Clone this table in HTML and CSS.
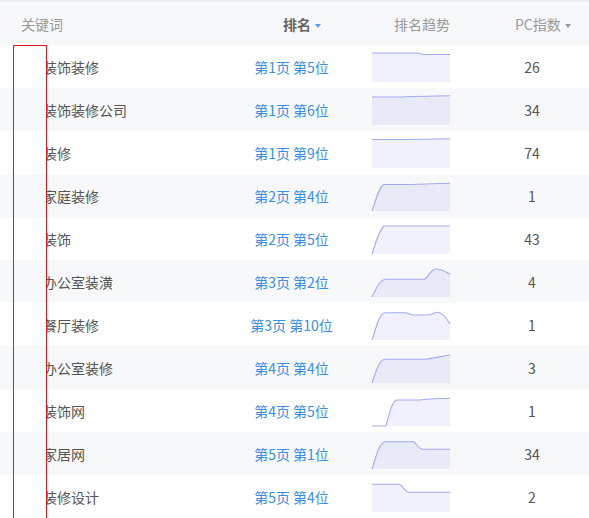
FILE: index.html
```html
<!DOCTYPE html>
<html lang="zh-CN">
<head>
<meta charset="utf-8">
<link rel="stylesheet" href="styles.css">
</head>
<body>
<div class="table">
  <div class="row head">
    <div class="c kw"><span class="h-kw">关键词</span></div>
    <div class="c rank"><span class="h-rank">排名<i class="arr blue"></i></span></div>
    <div class="c trend"><span class="h-trend">排名趋势</span></div>
    <div class="c pc"><span class="h-pc">PC指数<i class="arr gray"></i></span></div>
  </div>

  <div class="row">
    <div class="c kw"><span class="clip"><span class="t">装饰装修</span></span></div>
    <div class="c rank"><a class="lnk">第1页 第5位</a></div>
    <div class="c trend"><svg class="spark" viewBox="0 0 78 30"><path class="f" d="M0,1 L44,1 C48,1 49,2.5 53,2.5 L78,2.5 L78,30 L0,30 Z"/><path class="l" d="M0,1 L44,1 C48,1 49,2.5 53,2.5 L78,2.5"/></svg></div>
    <div class="c pc">26</div>
  </div>
  <div class="row alt">
    <div class="c kw"><span class="clip"><span class="t">装饰装修公司</span></span></div>
    <div class="c rank"><a class="lnk">第1页 第6位</a></div>
    <div class="c trend"><svg class="spark" viewBox="0 0 78 30"><path class="f" d="M0,2 L30,2 C40,1.5 50,1.2 78,0.8 L78,30 L0,30 Z"/><path class="l" d="M0,2 L30,2 C40,1.5 50,1.2 78,0.8"/></svg></div>
    <div class="c pc">34</div>
  </div>
  <div class="row">
    <div class="c kw"><span class="clip"><span class="t">装修</span></span></div>
    <div class="c rank"><a class="lnk">第1页 第9位</a></div>
    <div class="c trend"><svg class="spark" viewBox="0 0 78 30"><path class="f" d="M0,1.5 L40,1.5 C55,1.2 65,1 78,0.8 L78,30 L0,30 Z"/><path class="l" d="M0,1.5 L40,1.5 C55,1.2 65,1 78,0.8"/></svg></div>
    <div class="c pc">74</div>
  </div>
  <div class="row alt">
    <div class="c kw"><span class="clip"><span class="t">家庭装修</span></span></div>
    <div class="c rank"><a class="lnk">第2页 第4位</a></div>
    <div class="c trend"><svg class="spark" viewBox="0 0 78 30"><path class="f" d="M0,30 C4,18 7,6 12,3.5 L40,3.5 C55,3 65,2.3 78,2.3 L78,30 Z"/><path class="l" d="M0,30 C4,18 7,6 12,3.5 L40,3.5 C55,3 65,2.3 78,2.3"/></svg></div>
    <div class="c pc">1</div>
  </div>
  <div class="row">
    <div class="c kw"><span class="clip"><span class="t">装饰</span></span></div>
    <div class="c rank"><a class="lnk">第2页 第5位</a></div>
    <div class="c trend"><svg class="spark" viewBox="0 0 78 30"><path class="f" d="M0,30 C4,18 7,6 12,2 L78,2 L78,30 Z"/><path class="l" d="M0,30 C4,18 7,6 12,2 L78,2"/></svg></div>
    <div class="c pc">43</div>
  </div>
  <div class="row alt">
    <div class="c kw"><span class="clip"><span class="t">办公室装潢</span></span></div>
    <div class="c rank"><a class="lnk">第3页 第2位</a></div>
    <div class="c trend"><svg class="spark" viewBox="0 0 78 30"><path class="f" d="M0,30 C4,22 7,14 13,12.3 L52,12.3 C56,12 58,2 64,2 C70,2 74,5 78,7.3 L78,30 Z"/><path class="l" d="M0,30 C4,22 7,14 13,12.3 L52,12.3 C56,12 58,2 64,2 C70,2 74,5 78,7.3"/></svg></div>
    <div class="c pc">4</div>
  </div>
  <div class="row">
    <div class="c kw"><span class="clip"><span class="t">餐厅装修</span></span></div>
    <div class="c rank"><a class="lnk">第3页 第10位</a></div>
    <div class="c trend"><svg class="spark" viewBox="0 0 78 30"><path class="f" d="M0,30 C4,18 7,4 13,2.7 L33,2.7 C36,2.7 38,5 42,5 L55,5 C60,5 62,2.3 65,2.3 C70,2.3 75,9 78,14 L78,30 Z"/><path class="l" d="M0,30 C4,18 7,4 13,2.7 L33,2.7 C36,2.7 38,5 42,5 L55,5 C60,5 62,2.3 65,2.3 C70,2.3 75,9 78,14"/></svg></div>
    <div class="c pc">1</div>
  </div>
  <div class="row alt">
    <div class="c kw"><span class="clip"><span class="t">办公室装修</span></span></div>
    <div class="c rank"><a class="lnk">第4页 第4位</a></div>
    <div class="c trend"><svg class="spark" viewBox="0 0 78 30"><path class="f" d="M0,30 C4,18 7,7 13,6.3 L52,6.3 C60,6 70,3 78,2 L78,30 Z"/><path class="l" d="M0,30 C4,18 7,7 13,6.3 L52,6.3 C60,6 70,3 78,2"/></svg></div>
    <div class="c pc">3</div>
  </div>
  <div class="row">
    <div class="c kw"><span class="clip"><span class="t">装饰网</span></span></div>
    <div class="c rank"><a class="lnk">第4页 第5位</a></div>
    <div class="c trend"><svg class="spark" viewBox="0 0 78 30"><path class="f" d="M0,30 L14,30 C17,20 19,6 25,4 L48,4 C55,3 65,2.3 78,2.3 L78,30 Z"/><path class="l" d="M0,30 L14,30 C17,20 19,6 25,4 L48,4 C55,3 65,2.3 78,2.3"/></svg></div>
    <div class="c pc">1</div>
  </div>
  <div class="row alt">
    <div class="c kw"><span class="clip"><span class="t">家居网</span></span></div>
    <div class="c rank"><a class="lnk">第5页 第1位</a></div>
    <div class="c trend"><svg class="spark" viewBox="0 0 78 30"><path class="f" d="M0,30 C4,18 7,4 13,2.7 L41,2.7 C44,2.7 46,10.3 51,10.3 L78,10.3 L78,30 Z"/><path class="l" d="M0,30 C4,18 7,4 13,2.7 L41,2.7 C44,2.7 46,10.3 51,10.3 L78,10.3"/></svg></div>
    <div class="c pc">34</div>
  </div>
  <div class="row">
    <div class="c kw"><span class="clip"><span class="t">装修设计</span></span></div>
    <div class="c rank"><a class="lnk">第5页 第4位</a></div>
    <div class="c trend"><svg class="spark" viewBox="0 0 78 30"><path class="f" d="M0,2.3 L27,2.3 C30,2.3 33,10.3 37,10.3 L78,10.3 L78,30 L0,30 Z"/><path class="l" d="M0,2.3 L27,2.3 C30,2.3 33,10.3 37,10.3 L78,10.3"/></svg></div>
    <div class="c pc">2</div>
  </div>

  <div class="redbox"></div>
</div>
</body>
</html>
```

FILE: styles.css
```css
html, body {
  margin: 0;
  padding: 0;
  background: #fff;
}
body {
  font-family: "Noto Sans CJK SC", "Noto Sans", sans-serif;
  font-size: 14px;
  color: #555;
  overflow: hidden;
}
.table {
  position: relative;
  width: 589px;
  border-top: 2px solid #eceef1;
}
.row {
  display: grid;
  grid-template-columns: 230px 123px 139px 97px;
  height: 43px;
  align-items: center;
  background: #fff;
}
.row.alt {
  background: #f7f8fa;
}
.row.head {
  background: #f7f8fa;
  color: #999;
}
.c {
  line-height: 20px;
  white-space: nowrap;
}
.kw {
  padding-left: 47px;
  display: flex;
}
.head .kw {
  padding-left: 21px;
}
.clip {
  display: block;
  overflow: hidden;
  width: 180px;
}
.t {
  display: block;
  margin-left: -4px;
  color: #555;
}
.rank {
  text-align: center;
}
.head .rank {
  text-align: left;
  padding-left: 53px;
}
.h-rank {
  font-weight: bold;
  color: #666;
}
.lnk {
  color: #3b8de6;
  text-decoration: none;
}
.trend {
  padding-left: 19px;
  display: flex;
  align-items: center;
}
.head .trend {
  padding-left: 41px;
}
.spark {
  display: block;
  width: 78px;
  height: 30px;
  overflow: visible;
}
.spark .f {
  fill: rgba(110, 122, 232, 0.1);
  stroke: none;
}
.spark .l {
  fill: none;
  stroke: #a3aaf0;
  stroke-width: 1.1;
}
.pc {
  text-align: center;
  padding-right: 17px;
}
.head .pc {
  text-align: left;
  padding-left: 23px;
  padding-right: 0;
}
.arr {
  display: inline-block;
  width: 0;
  height: 0;
  margin-left: 4px;
  vertical-align: middle;
  border-left: 3.5px solid transparent;
  border-right: 3.5px solid transparent;
  border-top: 4px solid #999;
}
.arr.blue {
  border-top-color: #5b9cf0;
}
.arr.gray {
  border-top-color: #9a9a9a;
}
.redbox {
  position: absolute;
  left: 13px;
  top: 43px;
  width: 32px;
  height: 500px;
  border: 1px solid #e8141c;
}
```
